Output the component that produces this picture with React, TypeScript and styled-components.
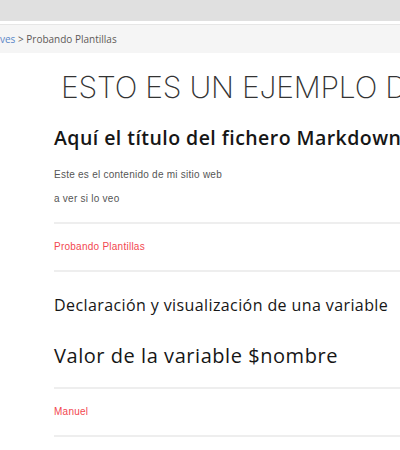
import React from "react";
import styled, { createGlobalStyle } from "styled-components";

const Global = createGlobalStyle`
  html, body { margin: 0; padding: 0; background: #fff; overflow: hidden; }
  body { font-family: "Open Sans", "Liberation Sans", sans-serif; }
`;

const Page = styled.div`
  width: 400px;
  height: 450px;
  overflow: hidden;
  display: flex;
  flex-direction: column;
`;

const TopBar = styled.div`
  height: 21px;
  background: #e0e0e0;
  flex-shrink: 0;
`;

const Breadcrumb = styled.nav`
  margin-top: 3px;
  height: 28px;
  border-top: 1px solid #e6e6e6;
  background: #f5f5f5;
  display: flex;
  align-items: center;
  font-family: "Open Sans", sans-serif;
  font-size: 10px;
  color: #5e5a58;
  white-space: nowrap;
  flex-shrink: 0;
`;

const Crumb = styled.span<{ $link?: boolean }>`
  color: ${(p) => (p.$link ? "#5a86c8" : "#5e5a58")};
`;

const Content = styled.main`
  padding-left: 54px;
  width: 460px;
  display: flex;
  flex-direction: column;
  flex-shrink: 0;
`;

const Title = styled.h1`
  margin: 14px 0 0 7px;
  font-family: Inter, "Open Sans", sans-serif;
  font-weight: 200;
  font-size: 30px;
  line-height: 40px;
  letter-spacing: -0.2px;
  color: #333;
  white-space: nowrap;
  -webkit-font-smoothing: antialiased;
`;

const Heading = styled.h2<{ $size: number; $weight: number; $mt: number; $lh: number; $ls: number }>`
  margin: ${(p) => p.$mt}px 0 0 0;
  font-family: "Open Sans", sans-serif;
  font-size: ${(p) => p.$size}px;
  font-weight: ${(p) => p.$weight};
  line-height: ${(p) => p.$lh}px;
  letter-spacing: ${(p) => p.$ls}px;
  color: #161616;
  white-space: nowrap;
`;

const Para = styled.p<{ $mt: number; $red?: boolean }>`
  margin: ${(p) => p.$mt}px 0 0 0;
  font-family: "Liberation Sans", sans-serif;
  font-size: 10px;
  line-height: 20px;
  letter-spacing: 0.25px;
  color: ${(p) => (p.$red ? "#f2474f" : "#555")};
  white-space: nowrap;
`;

const Rule = styled.hr<{ $mt: number }>`
  margin: ${(p) => p.$mt}px 0 0 0;
  border: none;
  height: 2px;
  background: #eeeeee;
  width: 100%;
`;

export default function App() {
  return (
    <>
      <Global />
      <Page>
        <TopBar />
        <Breadcrumb>
          <Crumb $link>ves</Crumb>
          <Crumb>&nbsp;&gt; Probando Plantillas</Crumb>
        </Breadcrumb>
        <Content>
          <Title>ESTO ES UN EJEMPLO DE PLANTILLA</Title>
          <Heading $size={19.5} $weight={600} $mt={18} $lh={26} $ls={0.45}>
            Aquí el título del fichero Markdown
          </Heading>
          <Para $mt={14}>Este es el contenido de mi sitio web</Para>
          <Para $mt={4}>a ver si lo veo</Para>
          <Rule $mt={13} />
          <Para $mt={13} $red>Probando Plantillas</Para>
          <Rule $mt={13} />
          <Heading $size={16} $weight={500} $mt={21} $lh={24} $ls={0.4}>
            Declaración y visualización de una variable
          </Heading>
          <Heading $size={20} $weight={500} $mt={25} $lh={28} $ls={0.55}>
            Valor de la variable $nombre
          </Heading>
          <Rule $mt={17} />
          <Para $mt={13} $red>Manuel</Para>
          <Rule $mt={13} />
        </Content>
      </Page>
    </>
  );
}
